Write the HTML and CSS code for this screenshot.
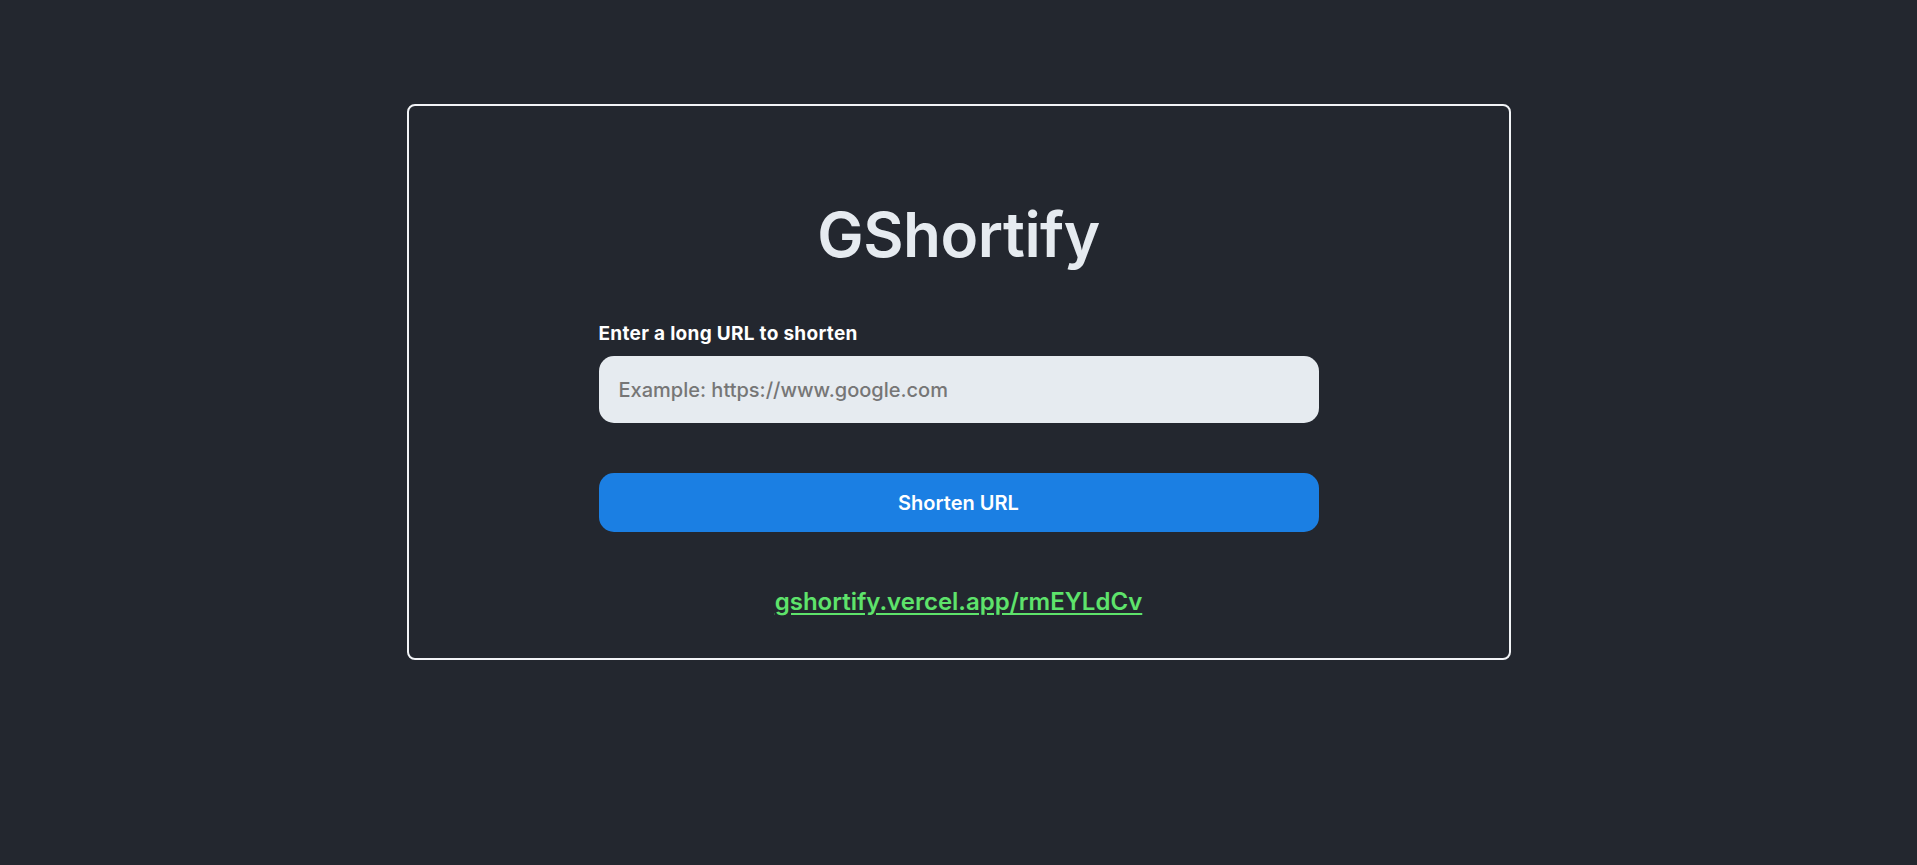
FILE: index.html
```html
<!DOCTYPE html>
<html lang="en">
<head>
<meta charset="utf-8">
<title>GShortify</title>
<link rel="stylesheet" href="styles.css">
</head>
<body>
<main class="page">
  <section class="card">
    <h1 class="title">GShortify</h1>
    <form class="form">
      <label class="label" for="url">Enter a long URL to shorten</label>
      <input class="input" id="url" type="text" placeholder="Example: https://www.google.com">
      <button class="button" type="button">Shorten URL</button>
    </form>
    <a class="result" href="#">gshortify.vercel.app/rmEYLdCv</a>
  </section>
</main>
</body>
</html>
```
FILE: styles.css
```css
* { box-sizing: border-box; }
html, body { margin: 0; padding: 0; }
body {
  background: #23272f;
  font-family: Inter, "Noto Sans", sans-serif;
  color: #e6ebf0;
  min-height: 865px;
}
.page {
  display: flex;
  justify-content: center;
  padding-top: 104px;
}
.card {
  width: 1104px;
  height: 556px;
  border: 2px solid #f2f4f7;
  border-radius: 8px;
  display: flex;
  flex-direction: column;
  align-items: center;
  padding-top: 94px;
}
.title {
  margin: 0;
  font-size: 62px;
  font-weight: 600;
  line-height: 70px;
  color: #e6ebf0;
  letter-spacing: -0.5px;
}
.form {
  width: 720px;
  display: flex;
  flex-direction: column;
  margin-top: 52px;
}
.label {
  font-size: 19px;
  font-weight: 700;
  color: #ffffff;
  line-height: 24px;
  margin-bottom: 10px;
  letter-spacing: 0.3px;
}
.input {
  height: 67px;
  border: none;
  border-radius: 15px;
  background: #e6ebf0;
  padding: 0 20px;
  font-family: inherit;
  font-size: 20px;
  font-weight: 500;
  color: #333;
  outline: none;
}
.input::placeholder { color: #767676; }
.button {
  margin-top: 50px;
  height: 59px;
  border: none;
  border-radius: 15px;
  background: #1b7fe3;
  color: #ffffff;
  font-family: inherit;
  font-size: 20px;
  font-weight: 600;
  cursor: pointer;
}
.result {
  margin-top: 55px;
  font-size: 24px;
  font-weight: 600;
  color: #5ee36b;
  text-decoration: underline;
  text-underline-offset: 3px;
  line-height: 30px;
}
```
